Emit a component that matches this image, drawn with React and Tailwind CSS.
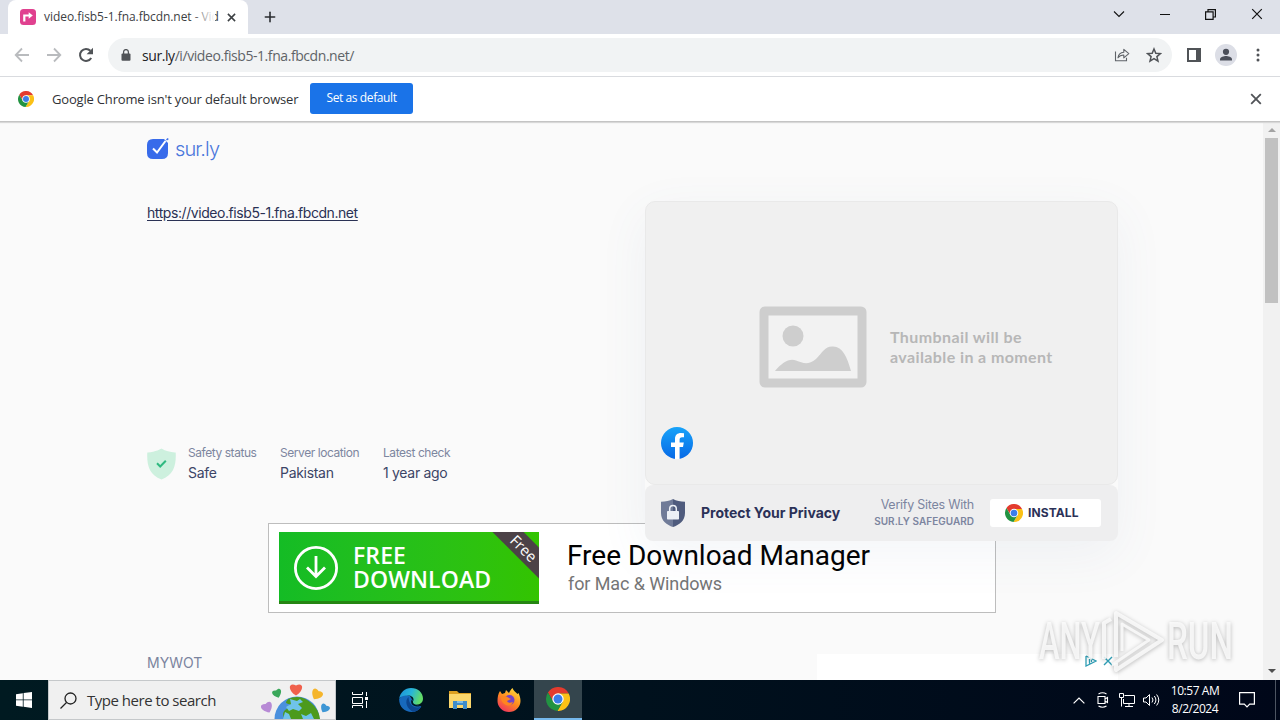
import { FiPlus } from 'react-icons/fi';

const ChromeLogo = ({ className }) => (
  <svg viewBox="2 2 44 44" className={className}>
    <path fill="#e33b2e" d="M5.54 12.03A22 22 0 0 1 43.6 14H24v10l-8.66 5Z" />
    <path fill="#fbc116" d="M43.6 14A22 22 0 0 1 22.86 45.97L32.66 29 24 24V14Z" />
    <path fill="#229342" d="M22.86 45.97A22 22 0 0 1 5.54 12.03L15.34 29 24 24l8.66 5Z" />
    <circle cx="24" cy="24" r="10.4" fill="#fff" />
    <circle cx="24" cy="24" r="8.2" fill="#3b7de9" />
  </svg>
);

const CloseIcon = ({ className }) => (
  <svg viewBox="0 0 10 10" className={className} fill="none" stroke="currentColor">
    <path d="M1 1l8 8M9 1l-8 8" />
  </svg>
);

const TabStrip = () => (
  <div className="flex h-[34px] shrink-0 items-end bg-[#dee1e9] pl-2">
    <div className="flex h-[34px] w-[240px] items-center rounded-t-lg bg-white pl-3">
      <svg viewBox="0 0 16 16" className="h-4 w-4 shrink-0">
        <rect width="16" height="16" rx="3.5" fill="#e0418f" />
        <path d="M4.300 12.500V6.500h5" fill="none" stroke="#fff" strokeWidth="2.200" />
        <path d="M8.700 3.200L12.800 6.500 8.700 9.800Z" fill="#fff" />
      </svg>
      <div className="relative ml-2 w-[171px] text-[12px] tracking-[-0.05px] whitespace-nowrap text-[#3c4043]">
        video.fisb5-1.fna.fbcdn.net - Vid
        <div className="absolute inset-y-0 right-0 w-6 bg-linear-to-r from-transparent to-white" />
      </div>
      <CloseIcon className="ml-[12px] h-[9px] w-[9px] stroke-[1.7] text-[#3c4043]" />
    </div>
    <FiPlus className="mb-[9px] ml-[14px] h-4 w-4 stroke-[2.4] text-[#2b2d31]" />
    <div className="ml-auto flex h-[28px] items-center self-start text-[#111]">
      <svg viewBox="0 0 12 8" className="mr-[35px] h-2 w-3" fill="none" stroke="currentColor" strokeWidth="1.1">
        <path d="M1 1.5l5 5 5-5" />
      </svg>
      <svg viewBox="0 0 10 10" className="mr-[35px] h-[10px] w-[10px]" stroke="currentColor">
        <path d="M0 5.5h10" />
      </svg>
      <svg viewBox="0 0 11 11" className="mr-[35px] h-[11px] w-[11px]" fill="none" stroke="currentColor" strokeWidth="1.2">
        <path d="M.6 2.900h7.500v7.500H.6zM3 2.600V.6h7.400V8H8.400" />
      </svg>
      <CloseIcon className="mr-[17px] h-3 w-3 stroke-1" />
    </div>
  </div>
);

const Toolbar = () => (
  <div className="flex h-[43px] shrink-0 items-center border-b border-[#d9dbdf] bg-white pl-[14px]">
    <svg viewBox="0 0 16 16" className="h-4 w-4 text-[#b9bbbe]" fill="none" stroke="currentColor" strokeWidth="1.8">
      <path d="M15 8H2M8 1.5L1.7 8 8 14.5" />
    </svg>
    <svg viewBox="0 0 16 16" className="ml-4 h-4 w-4 text-[#b9bbbe]" fill="none" stroke="currentColor" strokeWidth="1.8">
      <path d="M1 8h13M8 1.5L14.3 8 8 14.5" />
    </svg>
    <svg viewBox="0 0 16 16" className="ml-4 h-4 w-4 text-[#505357]">
      <path d="M13.2 11A6 6 0 1 1 12.4 3.8" fill="none" stroke="currentColor" strokeWidth="2" />
      <path d="M15 .8v6.4H8.6Z" fill="currentColor" />
    </svg>
    <div className="ml-[14px] flex h-[34px] w-[1064px] items-center rounded-full bg-[#f1f3f4] pr-[10px] pl-[13px]">
      <svg viewBox="0 0 10 12" className="h-3 w-[10px] text-[#505357]">
        <rect x=".5" y="4.4" width="9" height="7.4" rx="1" fill="currentColor" />
        <path d="M2.6 5V3a2.4 2.4 0 0 1 4.8 0v2" fill="none" stroke="currentColor" strokeWidth="1.3" />
      </svg>
      <span className="ml-[11px] text-[14px] tracking-[-0.43px] text-[#5f6368]">
        <span className="text-[#202124]">sur.ly</span>/i/video.fisb5-1.fna.fbcdn.net/
      </span>
      <svg viewBox="0 0 16 16" className="ml-auto h-4 w-4 text-[#5f6368]" fill="none" stroke="currentColor" strokeWidth="1.1">
        <path d="M1.500 4.500v9.300h11v-3" />
        <path d="M4 10.800Q4.600 5.600 9.800 5.200V2.400l5 4.200-5 4.200V8Q6 8 4 10.800Z" strokeLinejoin="round" />
      </svg>
      <svg viewBox="0 0 16 16" className="ml-4 h-4 w-4 text-[#505357]" fill="none" stroke="currentColor" strokeWidth="1.5">
        <path d="M8 2l1.800 4.200 4.600.4-3.500 3 1.100 4.500L8 11.700l-4 2.400 1.100-4.500-3.500-3 4.600-.4Z" />
      </svg>
    </div>
    <svg viewBox="0 0 14 14" className="ml-[15px] h-[14px] w-[14px] text-[#505357]">
      <path d="M1 1h12v12H1z" fill="none" stroke="currentColor" strokeWidth="2" />
      <path d="M9 0h5v14H9z" fill="currentColor" />
    </svg>
    <svg viewBox="0 0 22 22" className="ml-[14px] h-[22px] w-[22px]">
      <circle cx="11" cy="11" r="11" fill="#dcdee6" />
      <circle cx="11" cy="7.8" r="3.1" fill="#4b4f5a" />
      <path d="M5 16.600v-1.400c0-2 4-3.100 6-3.100s6 1.100 6 3.100v1.400Z" fill="#4b4f5a" />
    </svg>
    <svg viewBox="0 0 4 14" className="ml-[19px] h-[14px] w-1 text-[#505357]" fill="currentColor">
      <circle cx="2" cy="2" r="1.5" />
      <circle cx="2" cy="7" r="1.5" />
      <circle cx="2" cy="12" r="1.5" />
    </svg>
  </div>
);

const InfoBar = () => (
  <div className="z-20 flex h-[45px] shrink-0 items-center border-b border-[#c4c4c4] bg-white pl-[18px] shadow-[0_1px_1px_#d8d8d8]">
    <ChromeLogo className="h-4 w-4" />
    <span className="mt-[2px] ml-[18px] w-[258px] text-[13px] tracking-[-0.18px] whitespace-nowrap text-[#303236]">
      Google Chrome isn't your default browser
    </span>
    <button className="mb-[2px] h-[31px] w-[103px] rounded-[3px] bg-[#1a73e8] text-[12px] tracking-[-0.4px] text-white">
      Set as default
    </button>
    <CloseIcon className="mr-[18px] ml-auto h-[12px] w-[12px] stroke-[1.5] text-[#505357]" />
  </div>
);

const stats = [
  { label: 'Safety status', value: 'Safe', width: 'w-[92px]' },
  { label: 'Server location', value: 'Pakistan', width: 'w-[103px]' },
  { label: 'Latest check', value: '1 year ago', width: 'w-[90px]' },
];

const SiteInfo = () => (
  <div className="flex w-[498px] flex-col">
    <a className="mt-[1px] text-[14px] leading-[21px] tracking-[-0.43px] text-[#2a3154] underline underline-offset-2">
      https://video.fisb5-1.fna.fbcdn.net
    </a>
    <div className="mt-[221px] flex">
      <svg viewBox="0 0 29 32" className="mt-1 mr-3 h-8 w-[29px]">
        <path d="M14.5.6Q21 4.600 28.700 4.400C29.300 17 27 27 14.500 31.500 2 27-.3 17 .3 4.400 8 4.600 14.500.6 14.500.6Z" fill="#cdf0de" />
        <path d="M10 15.300l3.200 3.200 5.600-5.800" fill="none" stroke="#2fb980" strokeWidth="2" />
      </svg>
      {stats.map((stat) => (
        <div key={stat.label} className={stat.width}>
          <p className="text-[12px] leading-[18px] tracking-[-0.44px] whitespace-nowrap text-[#7d869f]">{stat.label}</p>
          <p className="text-[14px] leading-[22px] tracking-[-0.3px] whitespace-nowrap text-[#3c4566]">{stat.value}</p>
        </div>
      ))}
    </div>
  </div>
);

const PreviewCard = () => (
  <div className="z-10 flex h-[340px] w-[473px] flex-col rounded-[10px] shadow-[0_14px_50px_rgba(90,110,150,0.07)]">
    <div className="flex h-[284px] flex-col rounded-[10px] border border-[#e9e9e9] bg-[#f0f0f0] pt-[104px] pl-[15px]">
      <div className="flex items-center pl-[98px]">
        <svg viewBox="0 0 108 82" className="h-[82px] w-[108px] shrink-0">
          <rect x="5" y="5" width="98" height="72" rx="1" fill="#f2f2f2" stroke="#cecece" strokeWidth="9" strokeLinejoin="round" />
          <circle cx="34" cy="30" r="10.500" fill="#cecece" />
          <path d="M16 65C23 57 30 52 37 54.500S49 59.500 57 53C64 46 66 40 74 40.500 84 41 88 51 92 65Z" fill="#cecece" />
        </svg>
        <p className="ml-[23px] font-[Lato,sans-serif] text-[16px] leading-5 font-bold tracking-[0.4px] whitespace-nowrap text-[#b7b7b7]">
          Thumbnail will be
          <br />
          available in a moment
        </p>
      </div>
      <svg viewBox="0 0 32 32" className="mt-[39px] h-8 w-8">
        <defs>
          <linearGradient id="fb" x1="0" y1="0" x2="0" y2="1">
            <stop offset="0" stopColor="#18a3f9" />
            <stop offset="1" stopColor="#0769e6" />
          </linearGradient>
        </defs>
        <circle cx="16" cy="16" r="16" fill="url(#fb)" />
        <path d="M14 32V20h-4v-4.600h4V12c0-4 2.300-6 6-6l3 .3v3.900h-1.900c-2 0-2.500 1-2.500 2.300v2.900h4.200L22 20h-3.400v12Z" fill="#fff" />
      </svg>
    </div>
    <div className="flex h-[56px] items-center rounded-[8px] bg-[#eeeeef] pb-[1px] pl-4">
      <svg viewBox="0 0 24 28" className="h-7 w-6">
        <path d="M12 0Q17 2.800 24 2.800V14C24 22 18 26 12 28Z" fill="#4f5b7d" />
        <path d="M12 0Q7 2.800 0 2.800V14C0 22 6 26 12 28Z" fill="#707b98" />
        <rect x="6" y="12" width="12" height="8.500" rx=".7" fill="#edf0f6" />
        <path d="M8.700 12.500V9.700a3.300 3.300 0 0 1 6.600 0v2.800" fill="none" stroke="#edf0f6" strokeWidth="1.500" />
      </svg>
      <span className="ml-4 w-[150px] text-[14px] font-bold tracking-[-0.02px] whitespace-nowrap text-[#2b3157]">
        Protect Your Privacy
      </span>
      <div className="w-[123px] text-right leading-4 whitespace-nowrap text-[#7c859f]">
        <p className="text-[12.500px] tracking-[-0.25px]">Verify Sites With</p>
        <p className="text-[10px] font-semibold tracking-[0.02px]">SUR.LY SAFEGUARD</p>
      </div>
      <button className="ml-4 flex h-7 w-[111px] items-center rounded-[3px] bg-white pl-[15px] text-[12px] font-bold tracking-[0.1px] text-[#2b3157]">
        <ChromeLogo className="mr-[5px] h-[18px] w-[18px]" />
        INSTALL
      </button>
    </div>
  </div>
);

const DownloadBanner = () => (
  <div className="-mt-[18px] ml-[268px] flex h-[90px] w-[728px] items-start border border-[#bdbdbd] bg-white pt-2 pl-[10px]">
    <div className="relative flex h-[72px] w-[260px] items-center overflow-hidden border-b-[3px] border-[#268613] bg-linear-to-r from-[#14bc25] to-[#33c400] pl-[14px] font-['Open_Sans',sans-serif]">
      <svg viewBox="0 0 46 46" className="mt-[2px] h-[46px] w-[46px]" fill="none" stroke="#fff" strokeWidth="2.800">
        <circle cx="23" cy="23" r="20.600" />
        <path d="M23 11v20.500M14 22.500l9 9 9-9" />
      </svg>
      <div className="mt-[1px] ml-[14px] text-[23px] leading-6 font-semibold tracking-[0.1px] text-white">
        <p>FREE</p>
        <p>DOWNLOAD</p>
      </div>
      <div className="absolute top-[5px] -right-[30px] flex h-[22px] w-[90px] rotate-45 items-center justify-center bg-[#4c4247] text-[15px] text-white">
        Free
      </div>
    </div>
    <div className="ml-7 pt-[6px] font-[Roboto,sans-serif] whitespace-nowrap">
      <p className="text-[28px] leading-9 text-black">Free Download Manager</p>
      <p className="pl-[1px] text-[18px] leading-5 tracking-[-0.1px] text-[#757575]">for Mac &amp; Windows</p>
    </div>
  </div>
);

const Scrollbar = () => (
  <div className="flex w-[17px] flex-col items-center justify-between bg-[#f1f1f1] pt-[6px] pb-[7px]">
    <div className="flex flex-col items-center">
      <svg viewBox="0 0 8 4" className="h-1 w-2">
        <path d="M0 4l4-4 4 4Z" fill="#a3a3a3" />
      </svg>
      <div className="mt-[6px] h-[165px] w-[13px] bg-[#c1c1c1]" />
    </div>
    <svg viewBox="0 0 8 4" className="h-1 w-2">
      <path d="M0 0l4 4 4-4Z" fill="#505050" />
    </svg>
  </div>
);

const Watermark = () => (
  <svg
    viewBox="0 0 210 70"
    className="absolute top-[605px] left-[1032px] z-20 h-[70px] w-[210px] overflow-visible drop-shadow-[0_1px_2px_rgba(0,0,0,0.3)]"
  >
    <g fill="#fafafa" fillOpacity="0.85" fontFamily="Roboto, sans-serif" fontSize="51" fontWeight="500">
      <text x="7" y="54" textLength="61" lengthAdjust="spacingAndGlyphs">ANY</text>
      <text x="135" y="54" textLength="66" lengthAdjust="spacingAndGlyphs">RUN</text>
    </g>
    <g fill="none" stroke="#fafafa" strokeOpacity="0.85" strokeWidth="4" strokeLinejoin="round">
      <path d="M72 54V18l7-4M84 52V8l46 27-46 30V58" />
      <path d="M90 46V19l27 16-37 25" strokeWidth="3" />
    </g>
  </svg>
);

const WebPage = () => (
  <div className="flex h-[558px] shrink-0 bg-[#fafafa] font-[Inter,sans-serif]">
    <div className="w-[1263px] overflow-hidden pt-4">
      <div className="flex h-[22px] items-center pl-[147px]">
        <svg viewBox="0 0 22 22" className="h-[22px] w-[22px]">
          <path d="M6 1h11l4 4v10q0 6-6 6H6q-6 0-6-6V7q0-6 6-6Z" fill="#386bea" />
          <path d="M6 10.500l4 4L18.500 3" fill="none" stroke="#fff" strokeWidth="2" />
          <path d="M19.500 1.800l1.800-1.200" stroke="#386bea" strokeWidth="1.500" />
        </svg>
        <span className="ml-[6px] text-[20px] font-light tracking-[-0.9px] text-[#4a76dc]">sur.ly</span>
      </div>
      <div className="mt-[41px] flex pl-[147px]">
        <SiteInfo />
        <PreviewCard />
      </div>
      <DownloadBanner />
      <div className="mt-[41px] flex pl-[147px]">
        <span className="w-[670px] text-[14px] leading-[17px] text-[#7a849e]">MYWOT</span>
        <div className="flex h-[26px] w-[301px] justify-end gap-[6px] bg-white pr-[5px] text-[#2f9eb5]">
          <svg viewBox="0 0 12 12" className="mt-[1px] h-3 w-3" fill="none" stroke="currentColor" strokeWidth="1.300">
            <path d="M1 1v10l10-5L1 1M4.500 4v4.500M6.500 5v2" />
          </svg>
          <CloseIcon className="mt-[2px] h-[10px] w-[10px] stroke-[1.400]" />
        </div>
      </div>
    </div>
    <Scrollbar />
  </div>
);

const Heart = ({ x, y, turn, color, size = 1 }) => (
  <path
    d="M0 5.500C-8 0-5.500-6 0-3 5.500-6 8 0 0 5.500Z"
    fill={color}
    transform={`translate(${x} ${y}) rotate(${turn}) scale(${size})`}
  />
);

const GlobeArt = () => (
  <svg viewBox="0 0 70 38" className="ml-auto h-[38px] w-[70px]">
    <circle cx="36" cy="38" r="22.500" fill="#4a90dd" />
    <path d="M27 18q12-5 22 3 9 7 10 17H24q-4-5 0-9 3-1 5-6-4 0-4-2Z" fill="#4c9a1c" />
    <path d="M29 18l7 2 3-2 3 3-5 2 4 4-3 3-6-2-4 2-3-4 5-3ZM40 33l5 2 5-3 3 6H42ZM24 31l4 2 2 5h-8Z" fill="#6fc3ea" />
    <Heart x="6" y="26" turn={-25} color="#b78ad5" size={1.1} />
    <Heart x="16" y="12" turn={-20} color="#3aa75a" size={0.9} />
    <Heart x="35" y="8" turn={0} color="#f0604c" size={1.2} />
    <Heart x="56" y="13" turn={30} color="#f5b52c" size={1.1} />
    <Heart x="64" y="27" turn={30} color="#3d96d5" size={0.9} />
  </svg>
);

const EdgeIcon = () => (
  <svg viewBox="0 0 24 24" className="h-6 w-6">
    <defs>
      <linearGradient id="edge" x1="0" y1="0" x2="1" y2="0.300">
        <stop offset="0" stopColor="#1c8fd9" />
        <stop offset=".55" stopColor="#28b5d9" />
        <stop offset="1" stopColor="#62dc68" />
      </linearGradient>
    </defs>
    <path d="M.1 11C0 19 6 24 12.500 24c4.500 0 8-2 9.800-5.500L16 16 11 8 4 6Z" fill="#1769bc" />
    <path d="M.1 11C1 4.500 6 0 12 0c7 0 12 4.800 12 10.500 0 4-3 6-6.300 6-3.500 0-4.700-1.500-4-2.500 2-2.500.5-6-3.700-6.500C5 7 1 8.500.1 11Z" fill="url(#edge)" />
    <path d="M9.500 9C5 13 8 21 14 23.800 18 23.500 21 21 22.300 18.500 17 21 10 18.500 9.500 9Z" fill="#0c468f" />
    <path d="M12.800 11.500c-2 3 .5 7 5.200 7 2 0 3.500-.5 4.500-1.500-6 1-9-1.500-8.500-3.500Z" fill="#001a24" />
  </svg>
);

const ExplorerIcon = () => (
  <svg viewBox="0 0 24 22" className="h-[22px] w-6">
    <path d="M1 2h8l2 2h12v5H1Z" fill="#dca021" />
    <path d="M1 5h22v14H1Z" fill="#fbd76c" />
    <path d="M5 12h14v8h-4v-4H9v4H5Z" fill="#3e8dca" />
    <path d="M9 12h6v2H9Z" fill="#80bee8" />
  </svg>
);

const FirefoxIcon = () => (
  <svg viewBox="0 0 24 24" className="h-6 w-6">
    <defs>
      <linearGradient id="fox" x1="0.800" y1="0" x2="0.200" y2="1">
        <stop offset="0" stopColor="#ffdd3d" />
        <stop offset=".5" stopColor="#ff8a1f" />
        <stop offset="1" stopColor="#ef2e63" />
      </linearGradient>
    </defs>
    <path d="M3 3l2 3 3-1 1-3 3 3c1-2 2-4 3.500-5 1 3 3.500 4 5 6l1-1c1 2 2 5 2 8A11.500 11 0 0 1 .5 13C.5 9 1 6 3 3Z" fill="url(#fox)" />
    <circle cx="12.500" cy="12" r="5" fill="#7543c7" />
    <path d="M4 9q5-2 8 1l2 1-4 2q1 3 6 1-2 5-7 3t-5-8Z" fill="#ff8520" />
  </svg>
);

const Taskbar = () => (
  <div className="flex h-10 shrink-0 bg-linear-to-r from-[#001a21] via-[#00111d] to-[#000719] font-['Open_Sans',sans-serif] text-white">
    <div className="flex w-12 items-center justify-center">
      <svg viewBox="0 0 16 16" className="h-4 w-4" fill="#fff">
        <path d="M0 2.200l6.800-1v6.300H0zM7.600 1.100L16 0v7.500H7.600zM0 8.300h6.800v6.400L0 13.800zM7.600 8.300H16V16l-8.400-1.200z" />
      </svg>
    </div>
    <div className="flex w-[288px] items-center border border-[#c5c8ca] bg-[#f0f0f0] pl-[11px]">
      <svg viewBox="0 0 17 17" className="h-[17px] w-[17px]" fill="none" stroke="#222" strokeWidth="1.300">
        <circle cx="10.500" cy="6.500" r="5.500" />
        <path d="M6.500 10.500L.5 16.500" />
      </svg>
      <span className="ml-[10px] text-[15px] tracking-[-0.48px] whitespace-nowrap text-[#333]">Type here to search</span>
      <GlobeArt />
      <div className="w-1" />
    </div>
    <div className="flex w-12 items-center justify-center">
      <svg viewBox="0 0 16 16" className="h-4 w-4" fill="none" stroke="#fff">
        <path d="M.5 0v2.500h10V0M.5 5.500h10v6H.5zM.5 16v-2.500h10V16M14.500 0v4M14.500 9v7" />
        <path d="M13 5h3v3h-3z" fill="#fff" stroke="none" />
      </svg>
    </div>
    <div className="flex w-[54px] items-center justify-center">
      <EdgeIcon />
    </div>
    <div className="flex w-[44px] items-center justify-center">
      <ExplorerIcon />
    </div>
    <div className="flex w-[52px] items-center justify-center pl-[2px]">
      <FirefoxIcon />
    </div>
    <div className="flex w-12 items-center justify-center border-b-2 border-[#76b9ed] bg-[#34454d]">
      <ChromeLogo className="h-6 w-6" />
    </div>
    <div className="ml-auto flex items-center">
      <svg viewBox="0 0 12 7" className="h-[7px] w-3" fill="none" stroke="#fff" strokeWidth="1.200">
        <path d="M.6 6.400L6 1l5.400 5.400" />
      </svg>
      <svg viewBox="0 0 14 16" className="ml-[11px] h-4 w-[14px]" fill="none" stroke="#fff" strokeWidth="1.100">
        <path d="M2 4.500h7v7H2zM9 7l2.500-1.500v5L9 9M2.500 2q4-2.500 8 0M2.500 14q4 2.500 8 0" />
      </svg>
      <svg viewBox="0 0 16 14" className="ml-[9px] h-[14px] w-4" fill="none" stroke="#fff">
        <path d="M5.500 2.500h10v8h-11V6M10 10.500v3M6 13.500h8M.5.500h4v4h-4zM2.500 5v8.500" />
      </svg>
      <svg viewBox="0 0 17 14" className="ml-2 h-[14px] w-[17px]" fill="none" stroke="#fff">
        <path d="M.5 5h2.500L6.500 1.500v11L3 9H.5zM9 4.500q2 2.500 0 5M11.300 3q3.200 4 0 8M13.600 1.500q4.400 5.500 0 11" />
      </svg>
      <div className="ml-2 w-[54px] text-center text-[12px] leading-[18px] tracking-[-0.45px] whitespace-nowrap">
        <p>10:57 AM</p>
        <p>8/2/2024</p>
      </div>
      <svg viewBox="0 0 16 16" className="ml-[17px] h-4 w-4" fill="none" stroke="#fff" strokeWidth="1.200">
        <path d="M.6.600h14.800v11.500h-4.700L8 14.800l-2.700-2.700H.6Z" />
      </svg>
      <div className="mr-1 ml-5 h-10 w-px bg-[#4d5562]" />
    </div>
  </div>
);

const App = () => {
  return (
    <div className="relative flex h-[720px] w-[1280px] flex-col overflow-hidden bg-white font-['Open_Sans',sans-serif]">
      <TabStrip />
      <Toolbar />
      <InfoBar />
      <WebPage />
      <Taskbar />
      <Watermark />
    </div>
  );
};

export default App;
